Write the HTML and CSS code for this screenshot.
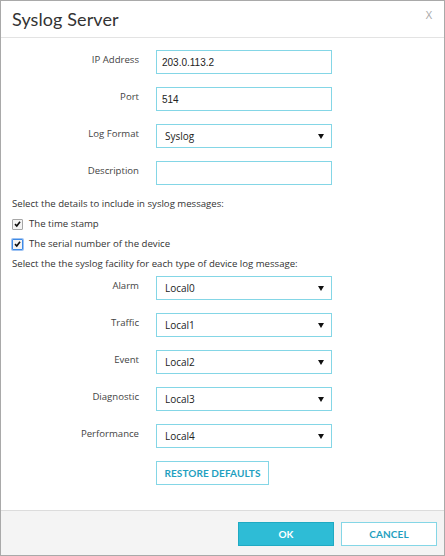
FILE: index.html
```html
<!DOCTYPE html>
<html>
<head>
<meta charset="utf-8">
<link rel="stylesheet" href="styles.css">
</head>
<body>
<div class="dialog">
  <div class="header">
    <div class="title">Syslog Server</div>
    <div class="close">X</div>
  </div>
  <div class="content">
    <div class="form">
      <label class="lbl">IP Address</label>
      <div class="field text">203.0.113.2</div>
      <label class="lbl">Port</label>
      <div class="field text">514</div>
      <label class="lbl">Log Format</label>
      <div class="field select"><span>Syslog</span><i class="arrow"></i></div>
      <label class="lbl">Description</label>
      <div class="field text"></div>
    </div>
    <div class="lines">
      <div class="line">Select the details to include in syslog messages:</div>
      <div class="line check"><span class="box"><svg viewBox="0 0 10 10" width="10" height="10"><path d="M2.2 5.2 L4.2 7.2 L7.8 2.6" fill="none" stroke="#111" stroke-width="1.8"/></svg></span>The time stamp</div>
      <div class="line check"><span class="box focus"><svg viewBox="0 0 10 10" width="10" height="10"><path d="M2.2 5.2 L4.2 7.2 L7.8 2.6" fill="none" stroke="#111" stroke-width="1.8"/></svg></span>The serial number of the device</div>
      <div class="line">Select the the syslog facility for each type of device log message:</div>
    </div>
    <div class="form sel">
      <label class="lbl">Alarm</label>
      <div class="field select"><span>Local0</span><i class="arrow"></i></div>
      <label class="lbl">Traffic</label>
      <div class="field select"><span>Local1</span><i class="arrow"></i></div>
      <label class="lbl">Event</label>
      <div class="field select"><span>Local2</span><i class="arrow"></i></div>
      <label class="lbl">Diagnostic</label>
      <div class="field select"><span>Local3</span><i class="arrow"></i></div>
      <label class="lbl">Performance</label>
      <div class="field select"><span>Local4</span><i class="arrow"></i></div>
      <span></span>
      <div class="restore-wrap"><button class="btn restore">RESTORE DEFAULTS</button></div>
    </div>
  </div>
  <div class="footer">
    <button class="btn ok">OK</button>
    <button class="btn cancel">CANCEL</button>
  </div>
</div>
</body>
</html>
```
FILE: styles.css
```css
* { box-sizing: border-box; }
html, body { margin: 0; padding: 0; }
body {
  font-family: "Open Sans", "Liberation Sans", sans-serif;
  background: #fff;
}
.dialog {
  width: 445px;
  height: 556px;
  border: 1px solid #a9a9a9;
  display: flex;
  flex-direction: column;
  background: #fff;
}
.header {
  height: 37px;
  flex: none;
  border-bottom: 1px solid #e3e3e3;
  display: flex;
  align-items: flex-start;
  justify-content: space-between;
  padding: 0 11px 0 11px;
}
.title {
  font-family: "Lato", "Open Sans", sans-serif;
  font-size: 18px;
  color: #333;
  line-height: 20px;
  margin-top: 8px;
  letter-spacing: 0.1px;
}
.close {
  font-family: "Open Sans", sans-serif;
  font-size: 11px;
  color: #a8a8a8;
  margin-top: 6px;
  margin-right: 1px;
}
.content {
  flex: 1;
  padding: 12px 11px 0 11px;
}
.form {
  display: grid;
  grid-template-columns: 127px 176px;
  column-gap: 17px;
  row-gap: 13px;
}
.lbl {
  font-size: 9.6px;
  color: #444;
  text-align: right;
  line-height: 20px;
}
.field {
  height: 24px;
  border: 1px solid #84d6e6;
  background: #fff;
  color: #222;
  display: flex;
  align-items: center;
}
.field.text {
  font-family: "Liberation Sans", Arial, sans-serif;
  font-size: 10px;
  padding-left: 5px;
}
.field.select {
  padding-left: 8px;
  padding-right: 7px;
  justify-content: space-between;
  font-family: "Open Sans", sans-serif;
  font-size: 10px;
}
.arrow {
  width: 0;
  height: 0;
  border-left: 3px solid transparent;
  border-right: 3px solid transparent;
  border-top: 5px solid #111;
  margin-top: 1px;
}
.lines {
  margin-top: 9px;
  margin-bottom: 2px;
}
.line {
  font-size: 9.6px;
  color: #333;
  line-height: 20px;
  height: 20px;
  display: flex;
  align-items: center;
}
.box {
  width: 11px;
  height: 11px;
  border: 1px solid #a6a6a6;
  background: #f4f4f4;
  border-radius: 1px;
  margin-right: 6px;
  display: flex;
  align-items: center;
  justify-content: center;
}
.box svg { display: block; }
.box.focus {
  border-color: #3f8be6;
  box-shadow: 0 0 0 1px #9fc3f3;
}
.restore-wrap { display: flex; }
.btn {
  font-family: "Lato", "Open Sans", sans-serif;
  font-weight: 700;
  font-size: 10px;
  letter-spacing: 0.1px;
  height: 24px;
  background: #fff;
  border: 1px solid #84d6e6;
  color: #1f9fc0;
  padding: 0;
  cursor: pointer;
}
.restore {
  width: 113px;
}
.footer {
  flex: none;
  height: 45px;
  border-top: 1px solid #dcdcdc;
  background: #f4f4f4;
  display: flex;
  justify-content: flex-end;
  align-items: flex-start;
  padding: 11px 7px 0 0;
  gap: 7px;
}
.ok {
  width: 96px;
  background: #2ebcd6;
  border-color: #1faac3;
  color: #fff;
}
.cancel {
  width: 96px;
}
```
